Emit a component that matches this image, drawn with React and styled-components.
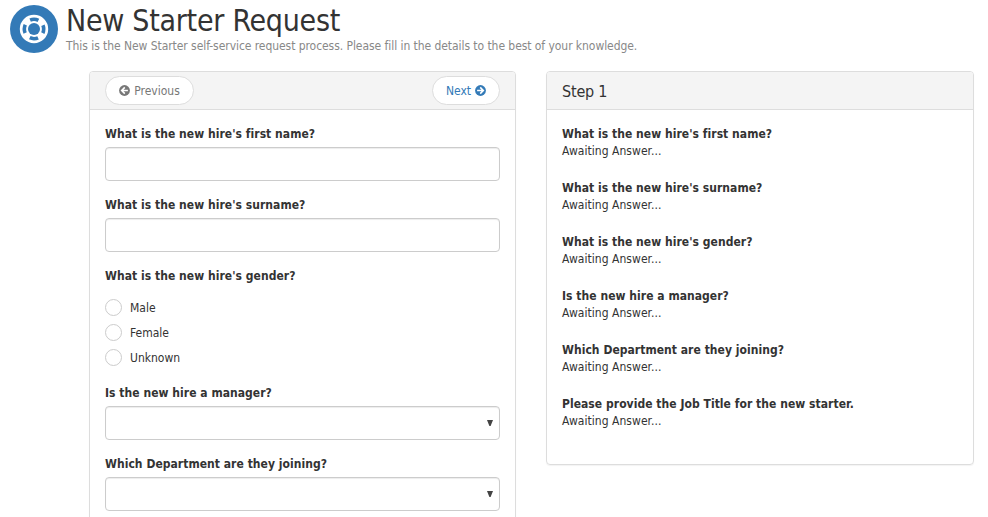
import React from "react";
import styled, { createGlobalStyle } from "styled-components";

const GlobalStyle = createGlobalStyle`
  * { box-sizing: border-box; }
  body {
    margin: 0;
    overflow: hidden;
    background: #fff;
    color: #333;
    font: 12px/17px "DejaVu Sans Condensed", "DejaVu Sans", Tahoma, sans-serif;
    font-stretch: condensed;
  }
`;

const Page = styled.main`
  height: 517px;
  overflow: hidden;
`;

const Header = styled.header`
  display: flex;
  gap: 8px;
  padding: 5px 0 0 10px;
  height: 71px;
`;

const Logo = styled.svg`
  width: 48px;
  height: 48px;
  flex: none;
`;

const Title = styled.h1`
  margin: -1px 0 0;
  font-size: 30px;
  line-height: 34px;
  font-weight: 400;
  letter-spacing: -0.27px;
  white-space: nowrap;
`;

const Subtitle = styled.p`
  margin: 0;
  color: #888;
  letter-spacing: -0.06px;
  white-space: nowrap;
`;

const Columns = styled.div`
  display: flex;
  align-items: flex-start;
  gap: 30px;
  padding-left: 89px;
`;

const Panel = styled.section`
  width: ${(p) => p.$width}px;
  border: 1px solid #ddd;
  border-radius: 4px;
  box-shadow: 0 1px 1px rgba(0, 0, 0, 0.05);
`;

const PanelHeader = styled.div`
  display: flex;
  align-items: center;
  justify-content: space-between;
  height: 38px;
  padding: 0 15px;
  background: #f4f4f4;
  border-bottom: 1px solid #ddd;
  border-radius: 3px 3px 0 0;
`;

const PanelTitle = styled.h2`
  margin: 0;
  padding-top: 2px;
  font-size: 16px;
  line-height: 18px;
  font-weight: 400;
  letter-spacing: -0.2px;
`;

const PanelBody = styled.div`
  padding: 15px;
`;

const PillButton = styled.button`
  display: flex;
  align-items: center;
  justify-content: center;
  gap: 4px;
  width: ${(p) => p.$width}px;
  height: 29px;
  padding: 0;
  border: 1px solid #ddd;
  border-radius: 15px;
  background: #fff;
  color: ${(p) => (p.$primary ? "#337ab7" : "#777")};
  font: inherit;
`;

const ButtonText = styled.span`
  padding-top: 2px;
`;

const ArrowIcon = styled.svg`
  width: 11px;
  height: 11px;
  flex: none;
  transform: ${(p) => (p.$flip ? "scaleX(-1)" : "none")};
`;

const Field = styled.div`
  margin-bottom: ${(p) => p.$gap ?? 15}px;
`;

const Label = styled.label`
  display: block;
  padding-top: 1px;
  margin-bottom: 4px;
  font-weight: 700;
  letter-spacing: 0.04px;
`;

const Input = styled.input`
  display: block;
  width: 100%;
  height: 34px;
  border: 1px solid #ccc;
  border-radius: 4px;
  background: #fff;
  box-shadow: inset 0 1px 1px rgba(0, 0, 0, 0.075);
`;

const SelectBox = styled.div`
  display: flex;
  align-items: center;
  justify-content: flex-end;
  height: 34px;
  padding-right: 6px;
  border: 1px solid #ccc;
  border-radius: 4px;
  box-shadow: inset 0 1px 1px rgba(0, 0, 0, 0.075);
`;

const Options = styled.div`
  padding-top: 6px;
`;

const Option = styled.div`
  display: flex;
  align-items: center;
  gap: 8px;
  height: 25px;
`;

const OptionText = styled.span`
  padding-top: 2px;
`;

const Radio = styled.span`
  width: 17px;
  height: 17px;
  border: 1px solid #ccc;
  border-radius: 50%;
`;

const Answers = styled.div`
  display: grid;
  gap: 20px;
  padding: 16px 15px 34px;
`;

const Question = styled.div`
  font-weight: 700;
  letter-spacing: 0.04px;
`;

const Pending = styled.div`
  letter-spacing: 0.04px;
`;

const LifeRing = () => (
  <Logo viewBox="0 0 48 48">
    <circle cx="24" cy="24" r="24" fill="#337ab7" />
    <circle cx="24" cy="24" r="14.2" fill="#fff" />
    <circle
      cx="24" cy="24" r="9.7" fill="none" stroke="#337ab7" strokeWidth="3.6"
      strokeDasharray="8.5 6.737" strokeDashoffset="4.25"
    />
    <circle cx="24" cy="24" r="6" fill="#337ab7" />
  </Logo>
);

const Arrow = ({ flip }) => (
  <ArrowIcon viewBox="0 0 11 11" $flip={flip}>
    <circle cx="5.5" cy="5.5" r="5.4" fill="currentColor" />
    <path d="M2.1 5.5H8M5.2 2.4 8.3 5.5 5.2 8.6" fill="none" stroke="#fff" strokeWidth="1.6" />
  </ArrowIcon>
);

const Select = () => (
  <SelectBox>
    <svg width="6" height="6" viewBox="0 0 6 6">
      <path d="M0 0H6L3.6 6H2.4Z" fill="#444" />
    </svg>
  </SelectBox>
);

const questions = [
  "What is the new hire's first name?",
  "What is the new hire's surname?",
  "What is the new hire's gender?",
  "Is the new hire a manager?",
  "Which Department are they joining?",
  "Please provide the Job Title for the new starter.",
];

export default function App() {
  return (
    <Page>
      <GlobalStyle />
      <Header>
        <LifeRing />
        <div>
          <Title>New Starter Request</Title>
          <Subtitle>
            This is the New Starter self-service request process. Please fill in the details to the best of your knowledge.
          </Subtitle>
        </div>
      </Header>
      <Columns>
        <Panel $width={427}>
          <PanelHeader>
            <PillButton $width={89}><Arrow flip /><ButtonText>Previous</ButtonText></PillButton>
            <PillButton $width={68} $primary><ButtonText>Next</ButtonText><Arrow /></PillButton>
          </PanelHeader>
          <PanelBody>
            <Field><Label>{questions[0]}</Label><Input /></Field>
            <Field><Label>{questions[1]}</Label><Input /></Field>
            <Field $gap={14}>
              <Label>{questions[2]}</Label>
              <Options>
                {["Male", "Female", "Unknown"].map((o) => (
                  <Option key={o}><Radio /><OptionText>{o}</OptionText></Option>
                ))}
              </Options>
            </Field>
            <Field><Label>{questions[3]}</Label><Select /></Field>
            <Field><Label>{questions[4]}</Label><Select /></Field>
          </PanelBody>
        </Panel>
        <Panel $width={428}>
          <PanelHeader><PanelTitle>Step 1</PanelTitle></PanelHeader>
          <Answers>
            {questions.map((q) => (
              <div key={q}><Question>{q}</Question><Pending>Awaiting Answer...</Pending></div>
            ))}
          </Answers>
        </Panel>
      </Columns>
    </Page>
  );
}
